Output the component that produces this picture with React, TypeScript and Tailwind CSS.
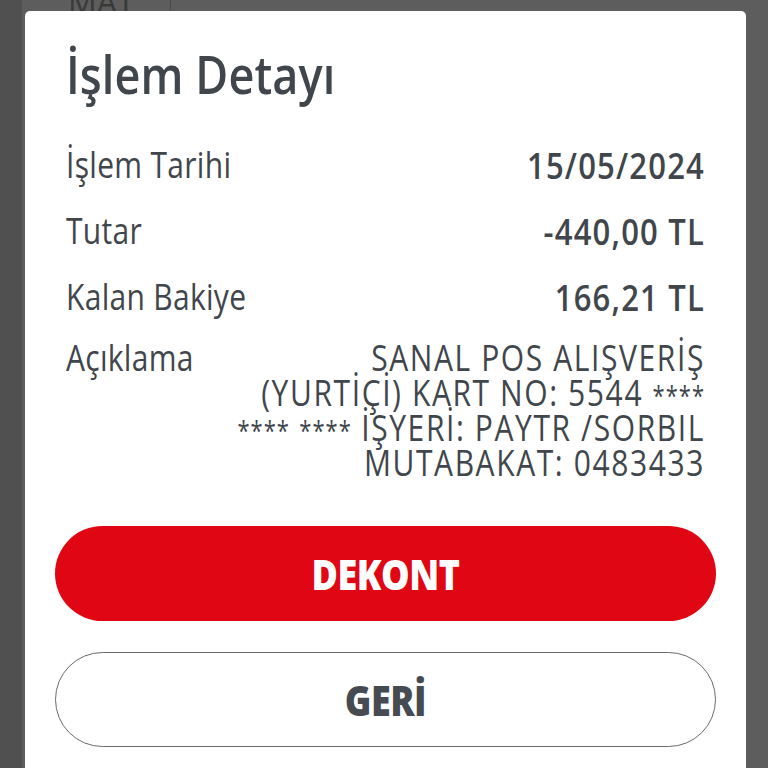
export default function App() {
  const rows = [
    { label: "İşlem Tarihi", value: "15/05/2024" },
    { label: "Tutar", value: "-440,00 TL" },
    { label: "Kalan Bakiye", value: "166,21 TL" },
  ];

  const stars = <span className="text-[22px] leading-none tracking-[1px]">****</span>;

  return (
    <div className="relative h-screen w-full overflow-hidden bg-[#5d5d5d] font-['Open_Sans',sans-serif]">
      {/* dimmed page behind the sheet */}
      <div className="absolute left-0 top-0 h-full w-[22px] bg-[#505050]" />
      <div className="absolute left-[68px] top-[-22px] text-[32px] text-[#3a3a3a]">MAT</div>
      <div className="absolute left-[170px] top-0 h-[11px] w-px bg-[#4a4a4a]" />

      <div className="relative ml-[25px] mt-[11px] h-[800px] w-[721px] rounded-t-[5px] bg-white px-[41px] text-[#40464b]">
        <h1 className="pt-[35px] text-[45px] font-semibold leading-[56px] tracking-[0.1px]">
          <span className="inline-block scale-y-[1.15]">İşlem Detayı</span>
        </h1>

        <div className="mt-[44px] flex flex-col gap-[28px]">
          {rows.map((r) => (
            <div key={r.label} className="flex items-center justify-between text-[30px] leading-[38px]">
              <span className="inline-block scale-y-[1.2] tracking-[0.3px]">{r.label}</span>
              <span className="inline-block scale-y-[1.15] text-[31px] font-semibold tracking-[1.2px]">{r.value}</span>
            </div>
          ))}
          <div className="-mt-[4px] flex items-start justify-between text-[30px] leading-[35px]">
            <span className="inline-block scale-y-[1.2] tracking-[0.3px]">Açıklama</span>
            <div className="text-right tracking-[1.6px]">
              <div className="origin-right scale-y-[1.2]">SANAL POS ALIŞVERİŞ</div>
              <div className="origin-right scale-y-[1.2]">(YURTİÇİ) KART NO: 5544 {stars}</div>
              <div className="origin-right scale-y-[1.2]">
                {stars} {stars} İŞYERİ: PAYTR /SORBIL
              </div>
              <div className="origin-right scale-y-[1.2]">MUTABAKAT: 0483433</div>
            </div>
          </div>
        </div>

        <div className="mt-[46px] flex flex-col gap-[31px]">
          <button className="-mx-[11px] h-[95px] rounded-full bg-[#e10613] text-[36px] font-extrabold tracking-[-0.5px] text-white">
            <span className="inline-block scale-y-[1.2]">DEKONT</span>
          </button>
          <button className="-mx-[11px] h-[95px] rounded-full border-[1.5px] border-[#6a6a6a] bg-white text-[36px] font-extrabold tracking-[-0.5px] text-[#454b50]">
            <span className="inline-block scale-y-[1.2]">GERİ</span>
          </button>
        </div>
      </div>
    </div>
  );
}
